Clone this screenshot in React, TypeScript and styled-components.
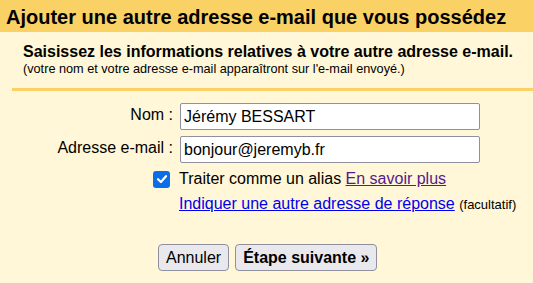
import styled, { createGlobalStyle } from "styled-components";

const GlobalStyle = createGlobalStyle`
  html, body {
    margin: 0;
    padding: 0;
    background: #fff7d7;
    font-family: "Liberation Sans", Arial, sans-serif;
    color: #000;
  }
`;

const App = () => {
  return (
    <>
      <GlobalStyle />
      <Page>
        <Header>Ajouter une autre adresse e-mail que vous possédez</Header>
        <Intro>
          <Lead>Saisissez les informations relatives à votre autre adresse e-mail.</Lead>
          <Note>(votre nom et votre adresse e-mail apparaîtront sur l'e-mail envoyé.)</Note>
        </Intro>
        <Divider />
        <Form>
          <Label htmlFor="name">Nom :</Label>
          <TextInput id="name" defaultValue="Jérémy BESSART" />
          <Label htmlFor="mail">Adresse e-mail :</Label>
          <TextInput id="mail" defaultValue="bonjour@jeremyb.fr" />
          <CheckCell>
            <CheckBox>
              <svg width="12" height="12" viewBox="0 0 12 12">
                <path d="M2 6.2 L4.9 9 L10 3.2" fill="none" stroke="#fff" strokeWidth="2.2" strokeLinecap="round" strokeLinejoin="round" />
              </svg>
            </CheckBox>
          </CheckCell>
          <Line>
            Traiter comme un alias <Link $visited href="#">En savoir plus</Link>
          </Line>
          <span />
          <Line>
            <Link href="#">Indiquer une autre adresse de réponse</Link> <Optional>(facultatif)</Optional>
          </Line>
        </Form>
        <Actions>
          <Button>Annuler</Button>
          <Button $primary>Étape suivante »</Button>
        </Actions>
      </Page>
    </>
  );
};

const Page = styled.div`
  width: 533px;
  height: 283px;
  overflow: hidden;
`;

const Header = styled.div`
  height: 32px;
  line-height: 34px;
  padding-left: 6px;
  background: #fad165;
  font-size: 20px;
  font-weight: bold;
  white-space: nowrap;
`;

const Intro = styled.div`
  padding: 11px 0 0 23px;
  height: 45px;
`;

const Lead = styled.div`
  font-size: 16px;
  font-weight: bold;
  line-height: 18px;
  white-space: nowrap;
`;

const Note = styled.div`
  font-size: 12.7px;
  line-height: 15px;
  margin-top: 1px;
  white-space: nowrap;
`;

const Divider = styled.div`
  height: 3px;
  margin-left: 12px;
  background: #fad165;
`;

const Form = styled.div`
  display: grid;
  grid-template-columns: 173px 300px;
  column-gap: 7px;
  row-gap: 6px;
  padding-top: 12px;
  align-items: center;
`;

const Label = styled.label`
  justify-self: end;
  font-size: 16px;
  margin-top: -4px;
`;

const TextInput = styled.input`
  box-sizing: border-box;
  width: 300px;
  height: 27px;
  border: 1px solid #8f8f9d;
  border-radius: 2px;
  padding: 0 3px;
  background: #fff;
  font-family: "Liberation Sans", Arial, sans-serif;
  font-size: 16px;
  color: #000;
  outline: none;
`;

const CheckCell = styled.div`
  justify-self: end;
  margin-right: 3px;
  margin-top: 1px;
  display: flex;
`;

const CheckBox = styled.span`
  width: 17px;
  height: 17px;
  border-radius: 3px;
  background: #0b6ee8;
  display: flex;
  align-items: center;
  justify-content: center;
`;

const Line = styled.div`
  font-size: 16px;
  line-height: 18px;
  margin-top: 1px;
  margin-left: -1px;
  white-space: nowrap;
`;

const Link = styled.a<{ $visited?: boolean }>`
  color: ${(p) => (p.$visited ? "#551a8b" : "#0000ee")};
  text-decoration: underline;
`;

const Optional = styled.span`
  font-size: 13px;
`;

const Actions = styled.div`
  display: flex;
  gap: 6px;
  padding: 30px 0 0 158px;
`;

const Button = styled.button<{ $primary?: boolean }>`
  height: 27px;
  padding: 0 7px;
  background: #e9e9ed;
  border: 1px solid #8f8f9d;
  border-radius: 4px;
  font-family: "Liberation Sans", Arial, sans-serif;
  font-size: 16px;
  font-weight: ${(p) => (p.$primary ? "bold" : "normal")};
  color: #000;
`;

export default App;
